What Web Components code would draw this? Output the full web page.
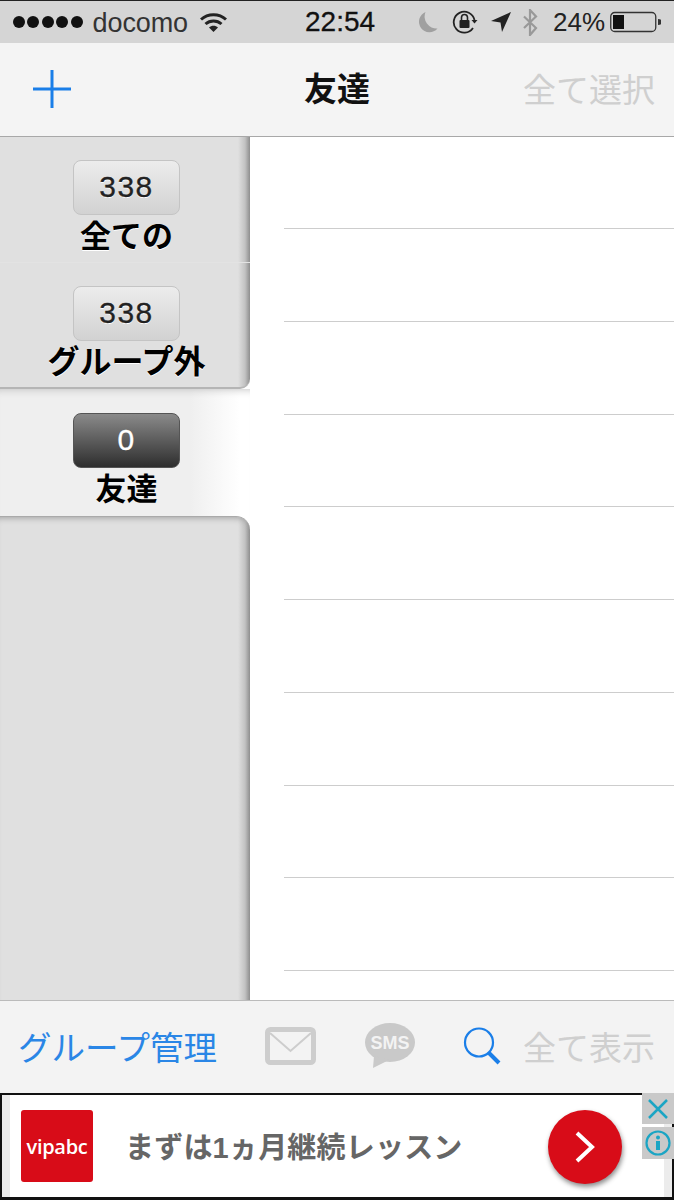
<!DOCTYPE html>
<html lang="ja">
<head>
<meta charset="utf-8">
<title>友達</title>
<style>
  html, body { margin: 0; padding: 0; background: #fff; }
  body { width: 674px; height: 1200px; overflow: hidden; display: flex; flex-direction: column;
    font-family: "Liberation Sans", "Noto Sans CJK JP", sans-serif; }
  .main { flex: 1; display: flex; min-height: 0; }
</style>
</head>
<body>
<status-bar></status-bar>
<nav-bar></nav-bar>
<div class="main">
  <group-rail>
    <group-tab count="338">全ての</group-tab>
    <group-tab count="338" last>グループ外</group-tab>
    <group-tab count="0" selected>友達</group-tab>
    <rail-filler></rail-filler>
  </group-rail>
  <friend-list rows="10"></friend-list>
</div>
<tool-bar></tool-bar>
<ad-banner></ad-banner>

<script>
'use strict';
const JP = '"Liberation Sans", "Noto Sans CJK JP", sans-serif';

/** Phone status bar */
class StatusBar extends HTMLElement {
  constructor() {
    super();
    this.attachShadow({mode: 'open'}).innerHTML = `
      <style>
        :host { display: flex; align-items: center; height: 42px; flex: none; background: #d5d5d5;
          border-top: 1px solid #222; box-sizing: content-box; color: #222; font-family: ${JP}; font-size: 26px; }
        .dots { display: flex; gap: 2.400px; margin-left: 13px; }
        .dots i { width: 12px; height: 12px; border-radius: 50%; background: #111; }
        .carrier { margin-left: 10px; font-size: 27px; letter-spacing: -.1px; padding-top: 2px; color: #333; }
        .wifi { margin-left: 12px; }
        .time { position: absolute; left: 305px; font-size: 28px; color: #111; -webkit-text-stroke: .3px #111; }
        .right { margin-left: auto; display: flex; align-items: center; margin-right: 13px; }
      </style>
      <div class="dots"><i></i><i></i><i></i><i></i><i></i></div>
      <span class="carrier">docomo</span>
      <svg class="wifi" width="27" height="21" viewBox="0 0 27 21">
        <path d="M1 7.500C8 1 19 1 26 7.500" fill="none" stroke="#222" stroke-width="3"/>
        <path d="M5.500 12C10 8 17 8 21.500 12" fill="none" stroke="#222" stroke-width="3"/>
        <path d="M9 15.500C11.500 13 15.500 13 18 15.500L13.500 20Z" fill="#222"/>
      </svg>
      <span class="time">22:54</span>
      <div class="right">
        <svg width="21" height="22" viewBox="0 0 21 22"><path d="M8.500 1A10.500 10.500 0 1 0 20.500 17.500 A12 12 0 0 1 8.500 1Z" fill="#a0a0a0"/></svg>
        <svg style="margin-left:14px" width="26" height="26" viewBox="0 0 26 26">
          <path d="M21 19A10.500 10.500 0 1 1 22.500 11" fill="none" stroke="#222" stroke-width="1.800"/>
          <path d="M19.500 11h6l-3 3.500Z" fill="#222"/>
          <rect x="7.500" y="11" width="10" height="8" rx="1" fill="#222"/>
          <path d="M9.500 11V8.500a3 3 0 0 1 6 0V11" fill="none" stroke="#222" stroke-width="1.600"/>
        </svg>
        <svg style="margin-left:13px" width="20" height="20" viewBox="0 0 20 20"><path d="M20 0L11 20 9.500 10.500 0 9Z" fill="#222"/></svg>
        <svg style="margin-left:11px" width="17" height="27" viewBox="0 0 17 27">
          <path d="M2 7.500L14 19 8 26V1l6 6.500L2 19" fill="none" stroke="#999" stroke-width="2.200"/>
        </svg>
        <span style="margin-left:14px;width:50px;padding-top:1px">24%</span>
        <svg style="margin-left:7px" width="51" height="22" viewBox="0 0 51 22">
          <rect x=".75" y="1.500" width="45" height="19" rx="4" fill="none" stroke="#333" stroke-width="1.300"/>
          <rect x="3" y="4" width="11" height="14" fill="#111"/>
          <path d="M48 8a4 3 0 0 1 0 6Z" fill="#333"/>
        </svg>
      </div>`;
  }
}
customElements.define('status-bar', StatusBar);

/** Top navigation bar */
class NavBar extends HTMLElement {
  constructor() {
    super();
    this.attachShadow({mode: 'open'}).innerHTML = `
      <style>
        :host { display: flex; align-items: center; position: relative; height: 93px; flex: none;
          background: #f4f4f4; border-bottom: 1px solid #a8a8a8; font-family: ${JP}; }
        svg { margin-left: 33px; margin-top: -1px; }
        .title { position: absolute; left: 0; right: 0; top: 23px; line-height: 47px; text-align: center; font-size: 33px; font-weight: 700; color: #111; }
        .all { margin-left: auto; margin-right: 19px; margin-top: -3px; font-size: 33px; color: #cfcfcf; }
      </style>
      <svg width="38" height="38" viewBox="0 0 38 38"><path d="M19 0V38M0 19H38" stroke="#1a7ee8" stroke-width="3"/></svg>
      <span class="title">友達</span>
      <span class="all">全て選択</span>`;
  }
}
customElements.define('nav-bar', NavBar);

/** Left column holding group tabs */
class GroupRail extends HTMLElement {
  constructor() {
    super();
    this.attachShadow({mode: 'open'}).innerHTML = `
      <style>
        :host { display: flex; flex-direction: column; width: 250px; flex: none; }
      </style>
      <slot></slot>`;
  }
}
customElements.define('group-rail', GroupRail);

/** One group tab: count badge and name */
class GroupTab extends HTMLElement {
  constructor() {
    super();
    const count = this.getAttribute('count');
    this.attachShadow({mode: 'open'}).innerHTML = `
      <style>
        :host { display: flex; flex-direction: column; align-items: center; height: 126px; flex: none; box-sizing: border-box;
          padding: 23px 0 0 3px; font-family: ${JP}; color: #000;
          background: linear-gradient(90deg, #e0e0e0 0, #e0e0e0 238px, #c2c2c2 245px, #8e8e8e 250px);
          border-bottom: 1px solid #e3e3e3; }
        :host([last]) { border-radius: 0 0 10px 0; height: 126px; border-bottom: 2px solid #b5b5b5; }
        :host([selected]) { height: 127px; background: linear-gradient(90deg, #efefef 0, #efefef 190px, #fff 240px);
          border: 0; padding-top: 24px; box-shadow: inset 0 8px 8px -8px #bbb; }
        .badge { width: 107px; height: 55px; box-sizing: border-box; border-radius: 8px; border: 1px solid #c4c4c4;
          background: linear-gradient(#ececec, #d2d2d2); display: flex; align-items: center; justify-content: center;
          font: 400 30px ${JP}; letter-spacing: 1.500px; color: #222; text-shadow: 0 1px 0 #fff; -webkit-text-stroke: .3px #222; padding-bottom: 2px; }
        :host([selected]) .badge { background: linear-gradient(#8a8a8a, #2e2e2e); border-color: #555; color: #fff; text-shadow: none; -webkit-text-stroke: .3px #fff; }
        .name { font-size: 31px; font-weight: 700; line-height: 43px; white-space: nowrap; text-shadow: 0 1px 0 #fff; }
        :host([last]) .name { font-size: 32px; }
        :host([selected]) .name { text-shadow: none; }
      </style>
      <div class="badge">${count}</div>
      <div class="name"><slot></slot></div>`;
  }
}
customElements.define('group-tab', GroupTab);

/** Empty rest of the rail */
class RailFiller extends HTMLElement {
  constructor() {
    super();
    this.attachShadow({mode: 'open'}).innerHTML = `
      <style>
        :host { display: block; flex: 1; border-radius: 0 14px 0 0; border-top: 1px solid #aaa;
          background: linear-gradient(90deg, #e0e0e0 0, #e0e0e0 238px, #c2c2c2 245px, #8e8e8e 250px);
          box-shadow: inset 0 6px 6px -5px #a0a0a0; }
      </style>`;
  }
}
customElements.define('rail-filler', RailFiller);

/** Empty friend list with ruled rows */
class FriendList extends HTMLElement {
  constructor() {
    super();
    const n = Number(this.getAttribute('rows'));
    this.attachShadow({mode: 'open'}).innerHTML = `
      <style>
        :host { display: block; flex: 1; overflow: hidden; background: #fff; }
        .row { height: 92.750px; box-sizing: border-box; margin-left: 34px; border-bottom: 1px solid #cdcdcd; }
        .row:first-of-type { height: 92px; }
      </style>
      ${'<div class="row"></div>'.repeat(n)}`;
  }
}
customElements.define('friend-list', FriendList);

/** Bottom toolbar */
class ToolBar extends HTMLElement {
  constructor() {
    super();
    this.attachShadow({mode: 'open'}).innerHTML = `
      <style>
        :host { display: flex; align-items: center; height: 92px; flex: none; background: #f3f3f3;
          border-top: 1px solid #bbb; font-family: ${JP}; font-size: 33px; }
        .manage { margin-left: 18px; width: 199px; font-size: 33.500px; color: #2a86e6; white-space: nowrap; margin-top: -3px; }
        .mail { margin-left: 48px; margin-top: -2px; }
        .sms { margin-left: 49px; margin-top: -2px; }
        .search { margin-left: 48px; margin-top: -2px; }
        .all { margin-left: 22px; color: #cfcfcf; white-space: nowrap; margin-top: -3px; }
        svg { flex: none; }
      </style>
      <span class="manage">グループ管理</span>
      <svg class="mail" width="51" height="38" viewBox="0 0 51 38">
        <rect x="2.500" y="2.500" width="46" height="33" rx="3" fill="none" stroke="#cdcdcd" stroke-width="5"/>
        <path d="M5 6L25.500 24 46 6" fill="none" stroke="#cdcdcd" stroke-width="2"/>
      </svg>
      <svg class="sms" width="50" height="46" viewBox="0 0 50 46">
        <ellipse cx="25" cy="19.500" rx="25" ry="19.500" fill="#c9c9c9"/>
        <path d="M9 33L8 45 24 37Z" fill="#c9c9c9"/>
        <text x="25" y="26" text-anchor="middle" font-family="Liberation Sans" font-size="18" font-weight="700" fill="#f3f3f3">SMS</text>
      </svg>
      <svg class="search" width="38" height="38" viewBox="0 0 38 38">
        <circle cx="16" cy="15.500" r="14" fill="none" stroke="#1a7ee8" stroke-width="2.200"/>
        <path d="M26 26L36 36" stroke="#1a7ee8" stroke-width="4"/>
      </svg>
      <span class="all">全て表示</span>`;
  }
}
customElements.define('tool-bar', ToolBar);

/** Advert at the page bottom */
class AdBanner extends HTMLElement {
  constructor() {
    super();
    this.attachShadow({mode: 'open'}).innerHTML = `
      <style>
        :host { display: flex; align-items: center; position: relative; height: 107px; flex: none; box-sizing: border-box;
          background: #fff; border: 2px solid #111; border-bottom-width: 3px; border-left-width: 2px;
          font-family: ${JP}; }
        :host::before { content: ""; position: absolute; left: 0; top: 0; bottom: 0; width: 8px; background: #ececec; }
        :host::after { content: ""; position: absolute; right: 0; top: 0; bottom: 0; width: 8px; background: #ececec; }
        .logo { margin-left: 19px; width: 72px; height: 72px; border-radius: 3px; background: #d80c18; color: #fff; flex: none;
          display: flex; align-items: center; justify-content: center; font: 600 20px "Open Sans", "Liberation Sans", sans-serif; letter-spacing: -.3px; }
        .copy { margin-left: 32px; font-size: 29px; letter-spacing: .2px; font-weight: 700; color: #666; white-space: nowrap; margin-top: -2px; }
        .go { position: absolute; left: 546px; top: 15px; width: 74px; height: 74px; border-radius: 50%; background: #d80c18;
          box-shadow: 1px 3px 5px rgba(0,0,0,.45); display: flex; align-items: center; justify-content: center; z-index: 1; }
        .box { position: absolute; right: -2px; width: 32px; background: #c9c9c9; display: flex; align-items: center; justify-content: center; z-index: 2; }
        .close { top: -2px; height: 31px; }
        .info { top: 32px; height: 32px; }
      </style>
      <div class="logo">vipabc</div>
      <div class="copy">まずは1ヵ月継続レッスン</div>
      <div class="go">
        <svg width="20" height="32" viewBox="0 0 20 32"><path d="M2 2L17 16 2 30" fill="none" stroke="#fff" stroke-width="4"/></svg>
      </div>
      <div class="box close">
        <svg width="22" height="22" viewBox="0 0 22 22"><path d="M2 2L20 20M20 2L2 20" stroke="#1ba5c4" stroke-width="2.500"/></svg>
      </div>
      <div class="box info">
        <svg width="26" height="26" viewBox="0 0 26 26">
          <circle cx="13" cy="13" r="11.500" fill="none" stroke="#1ba5c4" stroke-width="2.200"/>
          <circle cx="13" cy="7.500" r="2" fill="#1ba5c4"/>
          <rect x="11" y="11" width="4" height="9" fill="#1ba5c4"/>
        </svg>
      </div>`;
  }
}
customElements.define('ad-banner', AdBanner);
</script>
</body>
</html>
